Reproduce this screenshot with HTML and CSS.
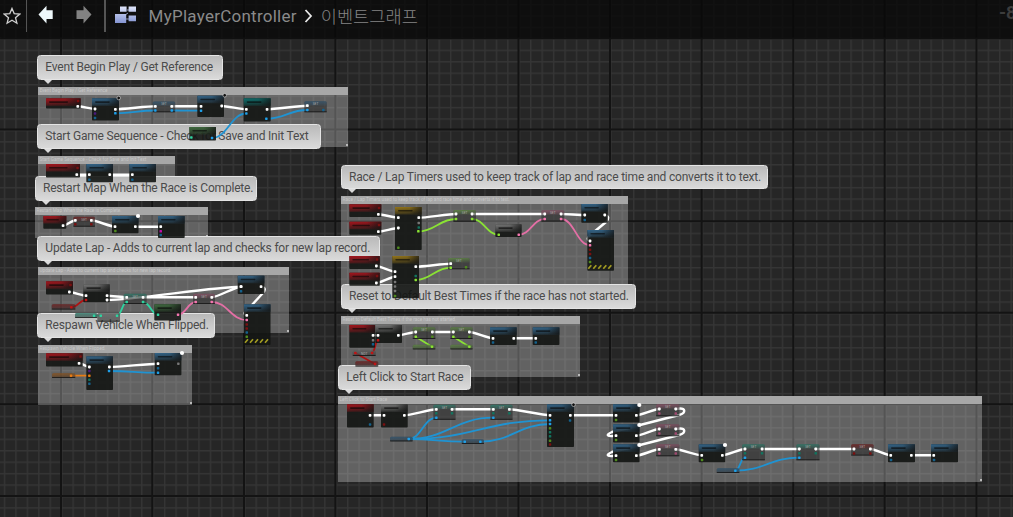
FILE: index.html
```html
<!DOCTYPE html>
<html lang="ko">
<head>
<meta charset="utf-8">
<title>MyPlayerController</title>
<link rel="stylesheet" href="styles.css">
</head>
<body>
<main class="graph">
  <svg class="grid" width="1013" height="517" aria-hidden="true">
    <defs>
      <pattern id="minor" x="61" y="38.2" width="11.44" height="11.44" patternUnits="userSpaceOnUse">
        <path class="minor-line" d="M0 .7H11.44M.7 0V11.44"/>
      </pattern>
    </defs>
    <rect width="1013" height="517" fill="url(#minor)"/>
    <path class="major-line" d="M61 0V517M152.3 0V517M244 0V517M335.4 0V517M427 0V517M518.5 0V517M610 0V517M701.7 0V517M793.3 0V517M884.7 0V517M976.5 0V517M0 38.2H1013M0 129.5H1013M0 221.3H1013M0 312.8H1013M0 404.3H1013M0 496H1013"/>
  </svg>
  <div class="layer" id="comments"></div>
  <div class="layer" id="bubbles"></div>
  <svg class="layer nodes" id="nodes" width="1013" height="517"></svg>
</main>
<header class="bar">
  <svg class="star" width="18" height="18" viewBox="0 0 18 18"><path d="M9 1.4 11.2 6.6 16.8 7.1 12.5 10.7 13.9 16.2 9 13.2 4.1 16.2 5.5 10.7 1.2 7.1 6.8 6.6Z"/></svg>
  <span class="rule"></span>
  <svg class="arrow back" width="16" height="20" viewBox="0 0 16 20"><path d="M.5 9.5 8.5 .8V5.2H14.7V14H8.5V18.6Z"/></svg>
  <svg class="arrow next" width="16" height="20" viewBox="0 0 16 20"><path d="M15.5 9.5 7.5 .8V5.2H.5V14H7.5V18.6Z"/></svg>
  <span class="rule"></span>
  <svg class="blocks" width="24" height="18" viewBox="0 0 24 18">
    <defs><linearGradient id="blk" x2="0" y2="1"><stop stop-color="#dfe5fa"/><stop offset="1" stop-color="#8494d2"/></linearGradient></defs>
    <path class="link" d="M13 4H15M11 9 14 7M12 13H15"/>
    <path fill="url(#blk)" d="M6 .5H12.6V5.8H6ZM14.6 .5H22V5.8H14.6ZM1 8H12.2V17H1ZM14.6 9.6H22V15.2H14.6Z"/>
  </svg>
  <nav class="crumbs"><span class="crumb">MyPlayerController</span><svg class="chevron" width="9" height="14" viewBox="0 0 9 14"><path d="M1.5 1 7 7 1.5 13"/></svg><span class="crumb ko">이벤트그래프</span></nav>
  <span class="zoom-level">-8</span>
</header>
<script src="graph.js"></script>
</body>
</html>
```
FILE: styles.css
```css
body {
  margin: 0;
  width: 1013px;
  height: 517px;
  overflow: hidden;
  position: relative;
  background: #262626;
  font-family: Roboto, "Noto Sans CJK KR", sans-serif;
}
.graph { position: absolute; inset: 0; }
.grid { display: block; }
.minor-line { stroke: #353535; stroke-width: 1.4; fill: none; }
.major-line { stroke: #131313; stroke-width: 2; fill: none; }
.layer { position: absolute; inset: 0; }

.bar {
  position: relative;
  display: flex;
  align-items: center;
  box-sizing: border-box;
  height: 37px;
  padding: 0 0 5px 3px;
  background: rgba(8, 8, 8, .78);
  box-shadow: 0 1px 2px rgba(0, 0, 0, .45);
}
.star path { fill: none; stroke: #d0d0d0; stroke-width: 1.3; }
.rule { width: 1.3px; height: 32px; background: #555; margin-left: 5px; }
.arrow { margin: -2px 0 0 11px; }
.back path { fill: #eef8fb; }
.next { margin-left: 22px; }
.next path { fill: #828282; }
.next + .rule { margin-left: 12px; }
.blocks { margin: -2px 0 0 8.5px; }
.link { stroke: #8e97b8; fill: none; }
.crumbs { display: flex; align-items: center; margin-left: 10.5px; }
.crumb { color: #8a8a8a; font-size: 17px; line-height: 30px; white-space: nowrap; letter-spacing: .25px; }
.crumb.ko { color: #848484; font-family: "Noto Sans CJK KR", sans-serif; font-size: 17.6px; font-weight: 300; letter-spacing: 0; }
.chevron { margin: 0 8px 0 7px; }
.chevron path { fill: none; stroke: #e8e8e8; stroke-width: 1.8; }
.zoom-level { position: absolute; left: 999px; top: 2px; color: #3c3c3c; font-size: 18px; font-weight: 700; }

.comment {
  position: absolute;
  background: rgba(255, 255, 255, .28);
}
.comment-title {
  height: 8px;
  box-sizing: border-box;
  padding-left: 1.5px;
  background: #a7a7a7;
  color: #c6c6c6;
  font-size: 4.7px;
  line-height: 8.5px;
  white-space: nowrap;
  overflow: hidden;
}
.comment::after {
  content: "";
  position: absolute;
  right: 0;
  bottom: 1px;
  width: 2px;
  height: 2px;
  background: #bbb;
}
.bubble {
  position: absolute;
  box-sizing: border-box;
  height: 24.5px;
  padding-left: 7.3px;
  border: 1px solid #e4e4e4;
  border-radius: 3.5px;
  background: linear-gradient(#b9b9b9, #c8c8c8 45%, #dadada);
  color: #4b4b4b;
  font-size: 12px;
  letter-spacing: -.2px;
  line-height: 22.5px;
  white-space: nowrap;
}
.bubble::after {
  content: "";
  position: absolute;
  left: 6px;
  top: 23.5px;
  border: 4.5px solid transparent;
  border-top-color: #dadada;
  border-bottom: 0;
}

.node-body { fill: #131513; fill-opacity: .9; }
.node-soft { fill: #2c2c2c; fill-opacity: .6; }
.node-edge { fill: #070707; fill-opacity: .6; }
.wire { fill: none; stroke: #fff; stroke-width: 2.4; stroke-linecap: round; }
.wire.thin { stroke-width: 1.8; }
.set-label { fill: #aaa; font-size: 3.2px; text-anchor: middle; }
.hazard { stroke: #a29b22; stroke-width: 1.7; fill: none; }
.badge-dark { fill: #111; stroke: #ddd; stroke-width: .6; }
.badge-light { fill: #fff; }
```
FILE: graph.js
```js
const comments = [
  [38, 87, 310, 60, 'Event Begin Play / Get Reference'],
  [38, 156, 137.3, 34, 'Start Game Sequence - Check for Save and Init Text'],
  [35, 207, 172.7, 31, 'Restart Map When the Race is Complete.'],
  [38, 267, 250.7, 66, 'Update Lap - Adds to current lap and checks for new lap record.'],
  [38, 345, 153.8, 59.5, 'Respawn Vehicle When Flipped.'],
  [341, 196, 287, 106, 'Race / Lap Timers used to keep track of lap and race time and converts it to text.'],
  [341, 316, 239, 60.5, 'Reset to Default Best Times if the race has not started.'],
  [338, 396, 644, 86, 'Left Click to Start Race']
];
const bubbles = [
  [37, 55, 185.7], [37, 124, 283.7], [34.7, 176, 222.6], [37, 236, 343],
  [37, 313, 178.3], [340.7, 164.6, 427.3], [340.7, 284.4, 295], [338, 365, 133]
];
const box = (el, [x, y, w, h]) => {
  el.style.left = x + 'px';
  el.style.top = y + 'px';
  el.style.width = w + 'px';
  if (h) el.style.height = h + 'px';
};
comments.forEach((c, i) => {
  const area = document.createElement('section');
  area.className = 'comment';
  box(area, c);
  const title = document.createElement('div');
  title.className = 'comment-title';
  title.textContent = c[4];
  area.append(title);
  document.getElementById('comments').append(area);

  const bubble = document.createElement('div');
  bubble.className = 'bubble';
  box(bubble, bubbles[i]);
  bubble.textContent = c[4];
  document.getElementById('bubbles').append(bubble);
});

const tint = {
  red: '#a5141c', blue: '#33658a', green: '#3f6b3f', yellow: '#94751a',
  gray: '#777', teal: '#0d6f6d', lime: '#6fa84a', pink: '#b0607f',
  aqua: '#2f9b84', orange: '#b8681c', darkred: '#8c1b1b'
};
/* Full nodes: [header tint, x, y, width, height] */
const nodes = `
red 46 98.3 34.7 10.3|blue 92 98.3 27 22.3|blue 197.3 95.7 26.7 21.3|green 189.3 127 26.7 13.5|teal 243.7 98.3 27 23.3
red 46 164 34 13.5|blue 86.3 164 26.7 18.3|blue 129.3 164 26.7 18.3
red 43.3 216 23 12.7|blue 112 216 26.5 17.3|blue 158 216 26.7 22
red 46 281.3 27 13.3|gray 83.3 284.3 26.5 18|green 154.3 304.3 26.7 16.3|blue 237.7 275.7 26.7 18.3|blue 244 304.3 26.5 40.7
red 46 353.3 36.7 13.3|blue 86.3 356.3 26.7 33.7|blue 154.7 353 26.7 22.3
red 349.3 204.3 32 12.7|red 349.3 221.7 32 13|yellow 395 207 26.7 43|gray 495.3 224.3 26.3 12.7|blue 581.3 204 26.5 18.7|blue 587.3 230 26.7 40.7
red 349.3 256 30.5 13|red 349.3 272.7 30.5 13|yellow 392.3 256 26.7 42.3
red 349.3 325 25.7 22.7|gray 375.3 325 26.7 18|blue 490 327.3 26.7 17.7|blue 532.7 327.3 26.7 17.7
red 347 404.3 26.7 23.3|gray 381 404.3 26.7 23.3|blue 547 404.3 27 42.7
blue 613 404.3 26.5 18.3|blue 613 424.3 26.5 18.3|blue 613 444.3 26.5 18|blue 698.7 444.3 26.5 18|blue 888 444.3 27 18|blue 931 444.3 27 18`;
/* Translucent nodes: tint, box, label ("-" for none) */
const softNodes = `
blue 152.7 101.5 22.5 10.8 SET|blue 304.3 101.3 22.5 11 SET|darkred 73.3 216.7 21.7 10 SET
darkred 51.7 304.3 23.7 5.3 -|aqua 75 313 22.3 5 -|gray 97.3 313 22.7 8.7 -|aqua 123.7 293.7 23 10.3 SET|pink 193 293.7 22 10.3 SET
orange 52 373.3 23.3 4.7 -|lime 453.3 210 22.7 11.7 SET|pink 541.3 210.3 23 11.3 SET|lime 448 258 21.7 11.3 SET
gray 352.7 350.7 23 5.3 NOT|darkred 355.3 361.3 23 5.3 -|lime 412.7 327.3 22.7 11.7 SET|lime 450.3 327.3 22.3 11.7 SET|lime 412.7 344.7 22.7 4.7 -|lime 450.3 344.7 22.3 4.7 -
aqua 433.3 404.8 22.3 15 SET|aqua 490.3 404.8 22.3 15 SET|blue 390 436.7 22.7 4.7 -|blue 461.7 439.3 22.3 4.7 -
pink 656 404.3 23.5 12 SET|pink 656 424.3 23.5 12 SET|pink 656 444.3 23.5 12 SET
aqua 742 444.3 23 16 SET|aqua 796.3 444.3 23.3 16 SET|darkred 851 444.3 22.7 11.3 SET|blue 716.7 468.3 22.7 4.7 -`;
/* Straight-ended connections: x1 y1 x2 y2 */
const wires = {
  '#ffffff': `77.7 106.3 95 109|115.3 109.3 155.3 106.3|171.7 106.3 201 106.3|221.7 106 246.3 109.3|267 109.3 307.3 105.7
76.7 174.7 89.3 174.7|109.7 174.7 132.3 174.7|63 225.7 75.3 220.3|91.3 220.3 115 226.7|135.3 226.7 160.7 226.7
69.3 292 86 295.7|107 295.7 126.7 297.3|107 300 241 286.7|143 297.3 195.7 297.3|211.7 297.3 241 286.7
79 363.3 89.3 367|109.3 367 158 363.7
378.3 214.3 398.3 217.7|378.3 231.7 398.3 228|418.7 217.7 456 214|472 214 544.7 214|561 214 584.7 215
376.3 266 395 271.7|376.3 283 395 276.7|415.7 266.7 450.7 263.7
373 335.3 378 335.3|398.3 335.3 415.7 332|432.3 332 453.3 332|469.3 332 493 338.3|513.7 338.3 535.7 338.3
370 415.3 384 415.3|404.3 415.3 436.3 409.3|452 409.3 493.3 409.3|509.3 409.3 550 415.3|570.3 415.3 616 415.3
636.3 415.3 659.3 409|636.3 435.7 659.3 429|636.3 455.7 659.3 449.3|675.7 449.3 701.7 455.3|722.3 455.3 745 449|762 449 799.3 449|815.7 449 854 449|870.3 449 890.7 455.3|911.3 455.3 933.7 455.3`,
  '#1f93d2': `115.3 113.3 155.3 110.5|171.7 110.5 201 110.7|212 138 246.3 113.5|266.3 118.7 307.3 110|109 371 158 372.7
408.7 439 436.3 417.7|408.7 439 493.3 417.7|408.7 439 550 420.3|408.7 439 464.7 441.7|480.3 441.7 550 424|735.3 470.7 745 457.7|735.3 470.7 799.3 457.7`,
  '#2fd3a0': `94 315.7 100.7 315.7|117 315.7 126.7 302|143 302 158 314.7`,
  '#e36fa5': `178 314.7 195.7 302|211.7 302 246.7 320|518.7 234.7 544.7 219|561 219 590 245.3`,
  '#8ae234': `418.3 231.3 456 219|472 219 498.7 234.7|415.7 280 450.7 267.7`,
  '#e87c14': `71 375.7 89.3 375.7`,
  '#b01212': `71.3 307.3 86 300|372 353 378 340.3`
};
/* Wires that run back to an earlier node */
const loops = [
  ['#ffffff', 'M261 286.7Q268 288 262 294L251 306Q241 314 247 315.3'],
  ['#ffffff', 'M604.7 215Q611 217 606 222L594 232Q584 239 590 241'],
  ['#ffffff', 'M675.7 409C687 407 686 413 679 415L640 425Q621 430 612 432C605 435 607 437 616 435.7'],
  ['#ffffff', 'M675.7 429C687 427 686 433 679 435L640 445Q621 450 612 452C605 455 607 457 616 455.7'],
  ['#8ae234', 'M415.7 336.7 432 346.7M453.3 336.7 469.3 346.7'],
  ['#b01212', 'M355.3 353 375 364']
];
/* Pins: x y */
const pins = {
  '#1f9fe8': `115.3 113.3|155.3 110.5|171.7 110.5|201 110.7|212 138|246.3 113.5|266.3 118.7|307.3 110|109 371|158 372.7|408.7 439|436.3 417.7|493.3 417.7|550 420.3|550 424|464.7 441.7|480.3 441.7|735.3 470.7|745 457.7|799.3 457.7`,
  '#14618c': `95 118|323.3 110|89.3 179.7|132.3 179.7|160.7 235|241 291.3|246.7 332.5|89.3 383.7|158 368.3|584.7 220|590 258|373 344.3|493 342.5|535.7 342.5|370 424.5|570 420.5|891 460|934 460`,
  '#4b1b7b': `95 113.5|89.3 371`,
  '#c40ca8': `160.7 231.3`,
  '#2fd3a0': `191.3 137.5|94 315.7|100.7 315.7|117 315.7|126.7 302|143 302|158 314.7`,
  '#12735e': `418.7 227.5|415.7 276|89.3 379.7|436.3 413.3|452 413.3|493.3 413.3|509.3 413.3|550 432.3|550 436.3|745 453.3|762 453.3|799.3 453.3|815.7 453.3`,
  '#f577b0': `178 314.7|195.7 302|211.7 302|246.7 320|518.7 234.7|544.7 219|561 219|590 245.3`,
  '#a04a70': `659.3 413.5|675.7 413.5|659.3 433.5|675.7 433.5|659.3 453.5|675.7 453.5`,
  '#8ae234': `418.3 231.3|456 219|472 219|498.7 234.7|415.7 280|450.7 267.7|415.7 336.7|432 346.7|453.3 336.7|469.3 346.7`,
  '#4f8a1e': `115.3 231|246.7 336.7|398.3 247.7|395 296|466 267.3|590 262|432.3 336.7|469.3 336.7|550 428.3|550 440.7|616 420|616 440|616 460|702 460`,
  '#e87c14': `71 375.7|89.3 375.7`,
  '#c01414': `71.3 307.3|86 300|372 353|378 340.3|355.3 353|375 364`,
  '#7a1010': `75.3 224.3|91.3 224.3|246.7 324.5|246.7 328.5|590 249.7|590 254|384 424.5|550 444.5|854 453.5|870.3 453.5|78 101|77.5 168|70.5 285|80.5 356.5|379 208|379 225|377 259.5|377 276`,
  '#777777': `178.3 363.7|418.7 223|395 282|395 286.5|395 291|373 340.3`
};
const split = s => s.trim().split(/[|\n]/).map(r => r.trim().split(' '));

let out = '<defs>';
for (const [name, color] of Object.entries(tint)) {
  out += `<linearGradient id="t-${name}" x2=".25" y2="1"><stop stop-color="${color}"/><stop offset=".35" stop-color="${color}" stop-opacity=".75"/><stop offset="1" stop-color="${color}" stop-opacity=".25"/></linearGradient>`;
}
out += '<linearGradient id="shade"><stop offset=".55" stop-color="#111" stop-opacity="0"/><stop offset="1" stop-color="#111" stop-opacity=".65"/></linearGradient></defs>';

for (const [color, list] of Object.entries(wires)) {
  for (const [x1, y1, x2, y2] of split(list).map(r => r.map(Number))) {
    const bend = (x2 - x1) * (color === '#ffffff' ? .2 : .45);
    out += `<path class="wire${color === '#ffffff' ? '' : ' thin'}" style="stroke:${color}" d="M${x1} ${y1}C${x1 + bend} ${y1} ${x2 - bend} ${y2} ${x2} ${y2}"/>`;
  }
}
for (const [color, d] of loops) out += `<path class="wire${color === '#ffffff' ? '' : ' thin'}" style="stroke:${color}" d="${d}"/>`;

for (const [name, ...dims] of split(nodes)) {
  const [x, y, w, h] = dims.map(Number);
  out += `<rect class="node-body" x="${x}" y="${y}" width="${w}" height="${h}" rx=".8"/>
    <rect x="${x}" y="${y}" width="${w}" height="7.5" fill="url(#t-${name})"/>
    <rect x="${x}" y="${y}" width="${w}" height="7.5" fill="url(#shade)"/>
    <rect class="node-edge" x="${x + 3}" y="${y + 3}" width="${w * .55}" height="1.6" rx=".8"/>`;
}
for (const [name, x, y, w, h, label] of split(softNodes)) {
  const head = Math.min(4.5, h);
  out += `<rect class="node-soft" x="${x}" y="${y}" width="${w}" height="${h}" rx="1.5"/>
    <rect x="${x}" y="${y}" width="${w}" height="${head}" rx="1.5" fill="url(#t-${name})" opacity=".6"/>
    <rect class="node-edge" x="${x}" y="${+y + +h - 1}" width="${w}" height="1"/>`;
  if (label !== '-') out += `<text class="set-label" x="${+x + w / 2}" y="${+y + 3.8}">${label}</text>`;
}
for (const [color, list] of Object.entries(pins)) {
  for (const [x, y] of split(list)) out += `<rect x="${x - 1.2}" y="${y - 1.2}" width="2.5" height="2.4" rx=".6" fill="${color}"/>`;
}
for (const [x1, y1, x2, y2] of split(wires['#ffffff'])) {
  for (const [x, y] of [[x1, y1], [x2, y2]]) out += `<rect x="${x - 1.3}" y="${y - 1.4}" width="2.7" height="2.8" rx=".8" fill="#fff"/>`;
}
for (const [x, y] of [[261, 286.7], [246.7, 315.3], [604.7, 215], [590, 241], [616, 435.7], [616, 455.7], [675.7, 409], [675.7, 429]]) {
  out += `<rect x="${x - 1.3}" y="${y - 1.4}" width="2.7" height="2.8" rx=".8" fill="#fff"/>`;
}
for (const [x, y] of [[244, 339], [587.3, 265]]) {
  for (let i = 1; i < 24; i += 5) out += `<path class="hazard" d="M${x + i} ${y + 3.8}l3-3.6"/>`;
}
for (const [x, y] of [[118.7, 98], [224.7, 95.3], [573.5, 404.7]]) out += `<circle class="badge-dark" cx="${x}" cy="${y}" r="1.8"/>`;
for (const [x, y] of [[138, 216], [182, 353], [639.3, 405], [639.3, 425], [639.3, 445], [725, 445]]) out += `<circle class="badge-light" cx="${x}" cy="${y}" r="2.1"/>`;
document.getElementById('nodes').innerHTML = out;
```
